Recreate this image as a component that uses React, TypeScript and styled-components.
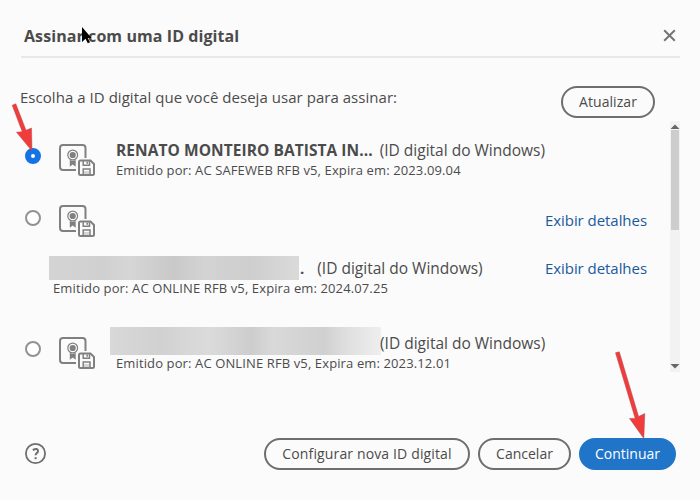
import React from "react";
import styled, { createGlobalStyle } from "styled-components";

const Global = createGlobalStyle`
  * { box-sizing: border-box; }
  body { margin: 0; background: #fbfbfb; }
`;

const Dialog = styled.main`
  position: relative;
  width: 700px;
  height: 500px;
  overflow: hidden;
  background: #fbfbfb;
  color: #4b4b4b;
  font-family: "Open Sans", "Noto Sans", sans-serif;
  font-size: 15px;
  display: flex;
  flex-direction: column;
`;

const Header = styled.header`
  height: 58px;
  margin: 0 20px 0 21px;
  padding: 15px 4px 0 3px;
  border-bottom: 2px solid #e8e8e8;
  display: flex;
  align-items: center;
  justify-content: space-between;
`;

const Title = styled.h1`
  margin: 0;
  font-size: 16px;
  line-height: 22px;
  font-weight: 700;
  white-space: nowrap;
  letter-spacing: 0.08px;
`;

const IconButton = styled.button`
  display: flex;
  padding: 0;
  border: 0;
  background: none;
`;

const Intro = styled.section`
  height: 63px;
  padding: 28px 45px 0 20px;
  display: flex;
  align-items: flex-start;
  justify-content: space-between;
`;

const Label = styled.span<{ $track?: number; $size?: number; $bold?: boolean }>`
  font-size: ${(p) => p.$size ?? 15}px;
  font-weight: ${(p) => (p.$bold ? 700 : 400)};
  letter-spacing: ${(p) => p.$track ?? 0}px;
  line-height: 22px;
  white-space: nowrap;
`;

const PillButton = styled.button<{ $width: number; $primary?: boolean }>`
  width: ${(p) => p.$width}px;
  height: 32px;
  padding: 0;
  border: 2px solid ${(p) => (p.$primary ? "#2175c9" : "#6e6e6e")};
  border-radius: 16px;
  background: ${(p) => (p.$primary ? "#2175c9" : "transparent")};
  color: ${(p) => (p.$primary ? "#fff" : "#4b4b4b")};
  font-family: inherit;
  display: flex;
  align-items: center;
  justify-content: center;
`;

const ListArea = styled.section`
  height: 252px;
  padding-right: 20px;
  display: flex;
  justify-content: space-between;
`;

const Rows = styled.ul`
  list-style: none;
  margin: 0;
  padding: 0;
  width: 648px;
`;

const Row = styled.li<{ $height: number; $top: number }>`
  height: ${(p) => p.$height}px;
  padding: ${(p) => p.$top}px 0 0 25px;
  display: flex;
  align-items: flex-start;
`;

const Radio = styled.span<{ $checked?: boolean; $top: number }>`
  flex: none;
  width: 16px;
  height: 16px;
  margin: ${(p) => p.$top}px 18px 0 0;
  border-radius: 50%;
  border: ${(p) => (p.$checked ? "6px solid #1473e6" : "2px solid #929292")};
  background: #fff;
`;

const IconSlot = styled.span<{ $top?: number }>`
  display: flex;
  padding-top: ${(p) => p.$top ?? 0}px;
`;

const Details = styled.div<{ $gap: number }>`
  padding-left: ${(p) => p.$gap}px;
  display: flex;
  flex-direction: column;
`;

const NameLine = styled.div<{ $height: number }>`
  display: flex;
  align-items: flex-start;
  height: ${(p) => p.$height}px;
`;

const Redacted = styled.span<{ $width: number; $height: number; $fade?: boolean }>`
  flex: none;
  width: ${(p) => p.$width}px;
  height: ${(p) => p.$height}px;
  background: ${(p) =>
    p.$fade
      ? "linear-gradient(90deg, #d8d8d8 0%, #d1d1d1 18%, #dbdbdb 37%, #cdcdcd 52%, #d9d9d9 60%, #d0d0d0 79%, #e0e0e0 88%, #eeeeee 100%)"
      : "linear-gradient(90deg, #d4d4d4 0%, #d0d0d0 22%, #d6d6d6 32%, #c9c9c9 50%, #d3d3d3 62%, #cecece 80%, #dadada 100%)"};
`;

const NameText = styled(Label)<{ $gap?: number; $top?: number }>`
  margin: ${(p) => p.$top ?? 0}px 0 0 ${(p) => p.$gap ?? 0}px;
`;

const Issuer = styled.span<{ $indent?: number }>`
  margin-left: ${(p) => p.$indent ?? 0}px;
  font-size: 13px;
  line-height: 18px;
  letter-spacing: 0.12px;
  white-space: nowrap;
`;

const Link = styled.a<{ $top: number }>`
  margin: ${(p) => p.$top}px 1px 0 auto;
  color: #1a5a9e;
  display: flex;
`;

const Scrollbar = styled.div`
  width: 10px;
  height: 251px;
  background: #f2f2f2;
  display: flex;
  flex-direction: column;
  align-items: center;
`;

const Thumb = styled.div`
  width: 8px;
  height: 100px;
  margin-bottom: auto;
  background: #cdcdcd;
`;

const Footer = styled.footer`
  margin-top: 65px;
  padding: 0 24px 0 25px;
  display: flex;
  align-items: center;
`;

const Actions = styled.div`
  margin-left: auto;
  display: flex;
  gap: 8px;
`;

const Overlay = styled.svg`
  position: absolute;
  inset: 0;
  pointer-events: none;
`;

const CertificateIcon = () => (
  <svg width="37" height="34" viewBox="0 0 37 34" fill="none" stroke="#808080">
    <path d="M17 26H4Q1 26 1 23V4Q1 1 4 1H23.5Q26.5 1 26.5 4V14" strokeWidth="2" />
    <circle cx="13.7" cy="11" r="4.9" strokeWidth="1.2" />
    <circle cx="13.7" cy="11" r="3.1" fill="#808080" stroke="none" />
    <path d="M10.8 16V22.8L13.7 20.6L16.7 22.8V16Q13.7 17.5 10.8 16Z" fill="#808080" stroke="none" />
    <path d="M21.5 16.5H31.5L35 20V29.5Q35 31 33.5 31H21.5Q20 31 20 29.5V18Q20 16.5 21.5 16.5Z" fill="#fbfbfb" strokeWidth="2" />
    <path d="M25 28.5H30.3" strokeWidth="3" stroke="#d5d5d5" />
    <path d="M24.2 17V21.3H30.5V17M24.2 30.5V25H31V30.5" strokeWidth="1.5" />
    <path d="M28.2 17.5V19.8" strokeWidth="1.5" />
  </svg>
);

const TypeLabel = ({ gap, top }: { gap: number; top: number }) => (
  <NameText $gap={gap} $top={top} $size={15.5}>
    (ID digital do Windows)
  </NameText>
);

const DetailsLink = ({ top }: { top: number }) => (
  <Link $top={top}>
    <Label $track={-0.05}>Exibir detalhes</Label>
  </Link>
);

export default function App() {
  return (
    <>
      <Global />
      <Dialog>
        <Header>
          <Title>Assinar com uma ID digital</Title>
          <IconButton aria-label="Fechar">
            <svg width="13" height="13" viewBox="0 0 13 13" stroke="#757575" strokeWidth="2">
              <path d="M1.2 1.2L11.8 11.8M11.8 1.2L1.2 11.8" />
            </svg>
          </IconButton>
        </Header>
        <Intro>
          <Label $track={0.04}>Escolha a ID digital que você deseja usar para assinar:</Label>
          <PillButton $width={94}><Label $size={14} $track={0.08}>Atualizar</Label></PillButton>
        </Intro>
        <ListArea>
          <Rows>
            <Row $height={62} $top={18}>
              <Radio $checked $top={9} />
              <IconSlot $top={5}><CertificateIcon /></IconSlot>
              <Details $gap={20}>
                <NameLine $height={22}>
                  <NameText $bold $size={15.5} $track={0.06}>RENATO MONTEIRO BATISTA IN...</NameText>
                  <TypeLabel gap={7} top={0} />
                </NameLine>
                <Issuer>Emitido por: AC SAFEWEB RFB v5, Expira em: 2023.09.04</Issuer>
              </Details>
            </Row>
            <Row $height={73} $top={22}>
              <Radio $top={5} />
              <IconSlot><CertificateIcon /></IconSlot>
              <DetailsLink top={4} />
            </Row>
            <Row $height={58} $top={0}>
              <Details $gap={24}>
                <NameLine $height={23}>
                  <Redacted $width={250} $height={24} />
                  <NameText $gap={1} $top={1} $bold>.</NameText>
                  <TypeLabel gap={13} top={1} />
                </NameLine>
                <Issuer $indent={4}>Emitido por: AC ONLINE RFB v5, Expira em: 2024.07.25</Issuer>
              </Details>
              <DetailsLink top={1} />
            </Row>
            <Row $height={57} $top={13}>
              <Radio $top={14} />
              <IconSlot $top={10}><CertificateIcon /></IconSlot>
              <Details $gap={14}>
                <NameLine $height={27}>
                  <Redacted $width={271} $height={28} $fade />
                  <TypeLabel gap={-1} top={5} />
                </NameLine>
                <Issuer $indent={6}>Emitido por: AC ONLINE RFB v5, Expira em: 2023.12.01</Issuer>
              </Details>
            </Row>
          </Rows>
          <Scrollbar>
            <svg width="10" height="9" viewBox="0 0 10 9"><path d="M0.5 8L5 3.5L9.5 8Z" fill="#666" /></svg>
            <Thumb />
            <svg width="10" height="9" viewBox="0 0 10 9"><path d="M0.5 1L5 5.5L9.5 1Z" fill="#666" /></svg>
          </Scrollbar>
        </ListArea>
        <Footer>
          <IconButton aria-label="Ajuda">
            <svg width="22" height="22" viewBox="0 0 22 22" fill="none" stroke="#6e6e6e" strokeWidth="2">
              <circle cx="10.5" cy="10.5" r="9.6" strokeWidth="1.8" />
              <path d="M7.8 7Q13 4.5 13 7.9C13 10 10.6 10 10.6 12.3" />
              <path d="M9.6 15.2H11.6" />
            </svg>
          </IconButton>
          <Actions>
            <PillButton $width={206}><Label $size={14} $track={0.14}>Configurar nova ID digital</Label></PillButton>
            <PillButton $width={93}><Label $size={14}>Cancelar</Label></PillButton>
            <PillButton $width={97} $primary><Label $size={14}>Continuar</Label></PillButton>
          </Actions>
        </Footer>
        <Overlay width="700" height="500" viewBox="0 0 700 500">
          <g fill="#f23b3b" stroke="#a94b4b" strokeWidth="0.5">
            <path d="M12.2 105.2L15.8 103.8L26 130.3L31.5 128L32 151L16.5 132.2L22.2 131.7Z" />
            <path d="M615.5 352.8L619.3 351.8L638.6 416.5L644.8 413.5L643.8 438.5L629.5 418.5L635.2 418.4Z" />
          </g>
          <path d="M82 27V42L85.5 38.8L87.8 43.3L90 42.2L87.8 38H91.5Z" fill="#000" />
        </Overlay>
      </Dialog>
    </>
  );
}
